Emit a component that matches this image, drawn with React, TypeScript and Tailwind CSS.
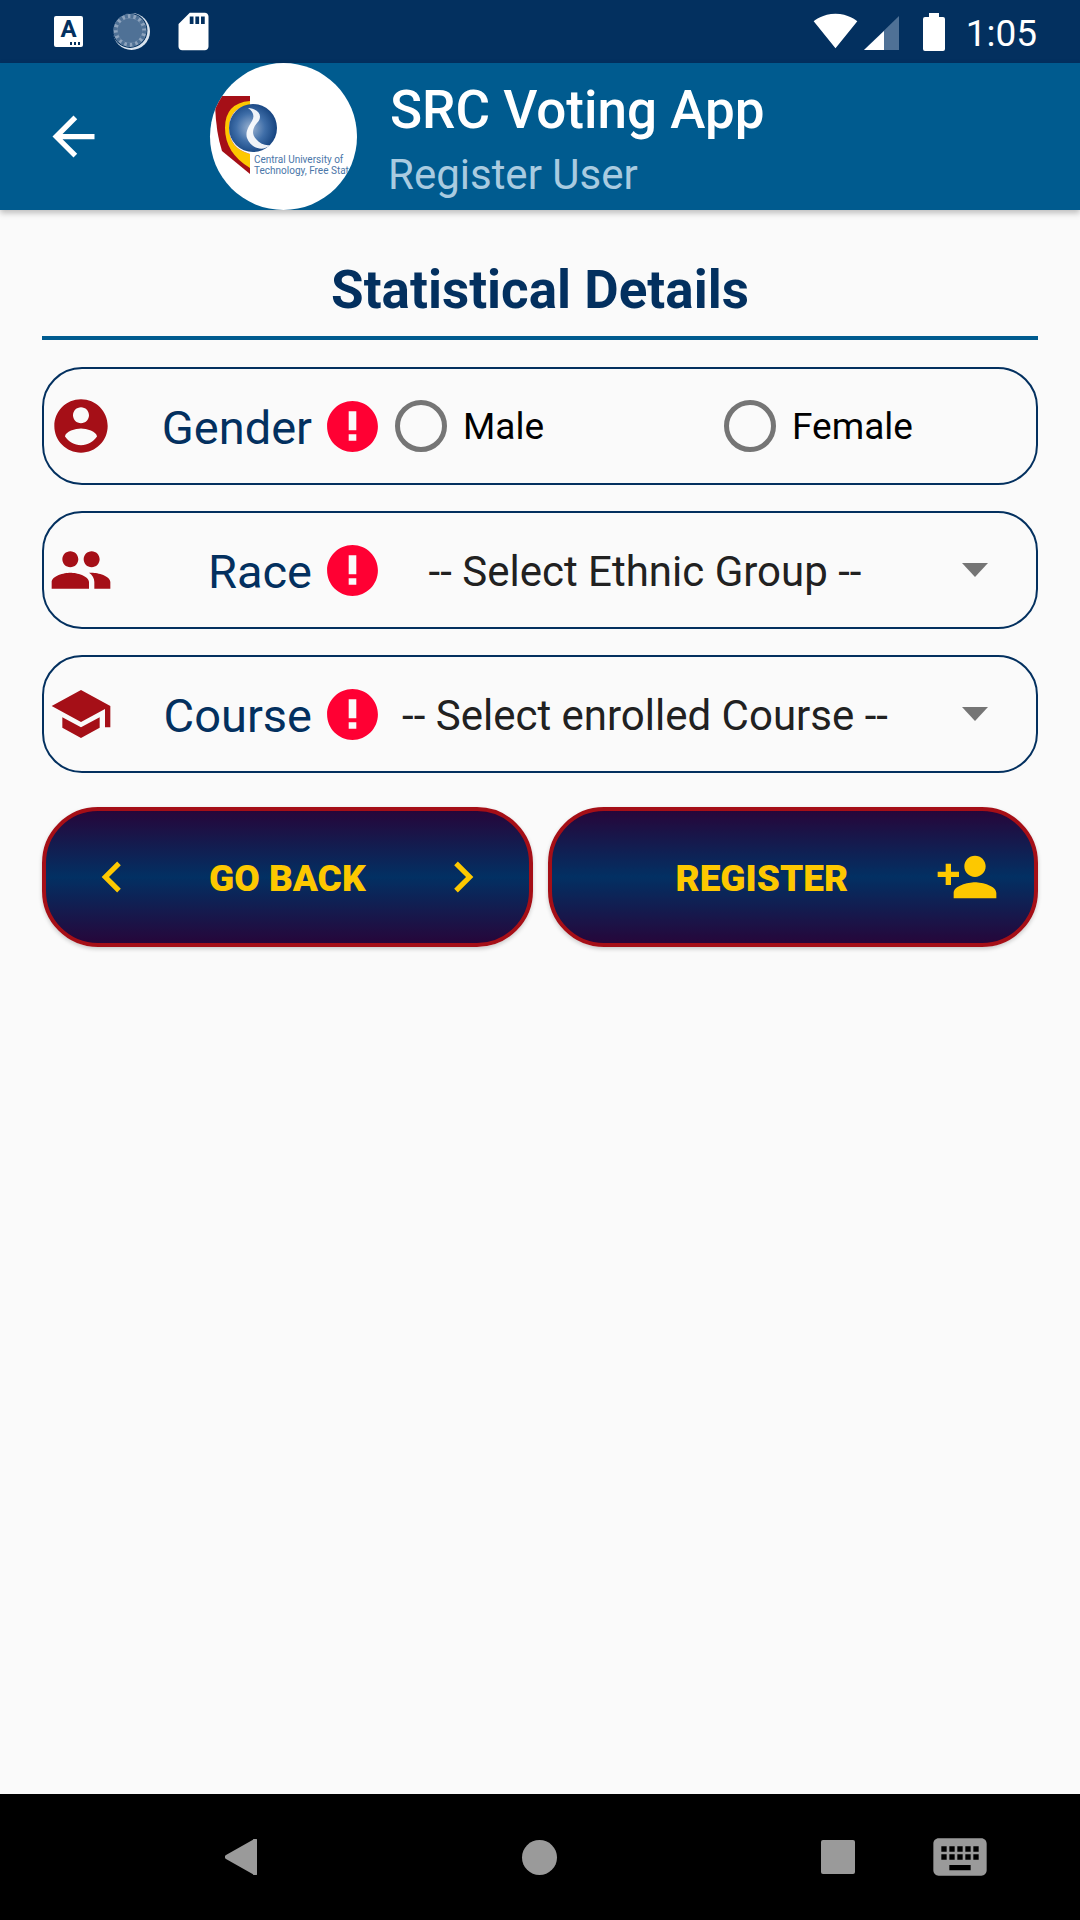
import type { ReactNode } from 'react';

const ICONS = {
  back: 'M20 11H7.83l5.59-5.59L12 4l-8 8 8 8 1.41-1.41L7.83 13H20v-2z',
  account: 'M12 2C6.48 2 2 6.48 2 12s4.48 10 10 10 10-4.48 10-10S17.52 2 12 2zm0 3c1.66 0 3 1.34 3 3s-1.34 3-3 3-3-1.34-3-3 1.34-3 3-3zm0 14.2c-2.5 0-4.71-1.28-6-3.22.03-1.99 4-3.08 6-3.08 1.99 0 5.97 1.09 6 3.08-1.29 1.94-3.5 3.22-6 3.22z',
  people: 'M16 11c1.66 0 2.99-1.34 2.99-3S17.66 5 16 5c-1.66 0-3 1.34-3 3s1.34 3 3 3zm-8 0c1.66 0 2.99-1.34 2.99-3S9.66 5 8 5C6.34 5 5 6.34 5 8s1.34 3 3 3zm0 2c-2.33 0-7 1.17-7 3.5V19h14v-2.5c0-2.33-4.67-3.5-7-3.5zm8 0c-.29 0-.62.02-.97.05 1.16.84 1.97 1.97 1.97 3.45V19h6v-2.5c0-2.33-4.67-3.5-7-3.5z',
  school: 'M5 13.18v4L12 21l7-3.82v-4L12 17l-7-3.82zM12 3L1 9l11 6 9-4.91V17h2V9L12 3z',
  left: 'M15.41 7.41L14 6l-6 6 6 6 1.41-1.41L10.83 12z',
  right: 'M10 6L8.59 7.41 13.17 12l-4.58 4.59L10 18l6-6z',
  personAdd: 'M15 12c2.21 0 4-1.79 4-4s-1.79-4-4-4-4 1.79-4 4 1.79 4 4 4zm-9-2V7H4v3H1v2h3v3h2v-3h3v-2H6zm9 4c-2.67 0-8 1.34-8 4v2h16v-2c0-2.66-5.33-4-8-4z',
  sd: 'M18 2h-8L4.02 8 4 20c0 1.1.9 2 2 2h12c1.1 0 2-.9 2-2V4c0-1.1-.9-2-2-2zm-6 6h-2V4h2v4zm3 0h-2V4h2v4zm3 0h-2V4h2v4z',
  keyboard: 'M20 5H4c-1.1 0-1.99.9-1.99 2L2 17c0 1.1.9 2 2 2h16c1.1 0 2-.9 2-2V7c0-1.1-.9-2-2-2zm-9 3h2v2h-2V8zm0 3h2v2h-2v-2zM8 8h2v2H8V8zm0 3h2v2H8v-2zm-1 2H5v-2h2v2zm0-3H5V8h2v2zm9 7H8v-2h8v2zm0-4h-2v-2h2v2zm0-3h-2V8h2v2zm3 3h-2v-2h2v2zm0-3h-2V8h2v2z',
};

function Icon({ d, className }: { d: string; className: string }) {
  return (
    <svg viewBox="0 0 24 24" fill="currentColor" className={`shrink-0 ${className}`}>
      <path d={d} />
    </svg>
  );
}

// the exclamation in the reference is heavier than the stock material one
function ErrorIcon() {
  return (
    <svg viewBox="0 0 24 24" fill="#ff0033" className="shrink-0 ml-[10px] w-[61px] h-[61px]">
      <path
        fillRule="evenodd"
        d="M12 2C6.48 2 2 6.48 2 12s4.48 10 10 10 10-4.48 10-10S17.52 2 12 2zM10.5 6h3v7.5h-3zM10.5 15h3v2.6h-3z"
      />
    </svg>
  );
}

function Logo() {
  return (
    <div className="w-[147px] h-[147px] rounded-full bg-white overflow-hidden shrink-0 z-10">
      <svg viewBox="0 0 147 147" className="w-full h-full">
        <defs>
          <radialGradient id="globe" cx="45%" cy="50%" r="55%">
            <stop offset="0%" stopColor="#9db4d2" />
            <stop offset="55%" stopColor="#3f6ea8" />
            <stop offset="100%" stopColor="#15437f" />
          </radialGradient>
        </defs>
        <path d="M9 33H40V111L12 88Q6 70 5 42Z" fill="#a50f17" />
        <path d="M40 38Q15 40 15 65Q15 90 40 105V91Q19 85 19 65Q19 45 40 42Z" fill="#fdc800" />
        <path d="M40 42Q19 45 19 65Q19 85 40 91Z" fill="#ffffff" />
        <circle cx="43" cy="65" r="24" fill="url(#globe)" />
        <path d="M38 45C50 46 53 54 47 60C43 65 41 70 46 76C50 81 56 83 60 82C52 90 40 84 37 75C35 69 39 63 42 58C45 53 43 48 38 45Z" fill="#ffffff" opacity="0.92" />
        <text x="44" y="100" fontSize="10" fill="#4a76a8" fontFamily="Roboto, sans-serif">Central University of</text>
        <text x="44" y="111" fontSize="10" fill="#4a76a8" fontFamily="Roboto, sans-serif">Technology, Free State</text>
      </svg>
    </div>
  );
}

function StatusBar() {
  return (
    <div className="h-[63px] bg-[#03305f] flex items-center text-white shrink-0">
      <div className="ml-[54px] w-[29px] h-[31px] rounded-[2px] bg-white relative flex justify-center">
        <span className="text-[#03305f] text-[24px] leading-[27px] font-bold">A</span>
        <span className="absolute right-[2px] bottom-[2px] w-[12px] h-[3px] bg-[radial-gradient(circle,#03305f_1.4px,transparent_1.5px)] bg-[length:4px_3px]" />
      </div>
      <svg viewBox="0 0 36 36" className="ml-[30px] w-[37px] h-[37px] shrink-0">
        <circle cx="18" cy="18" r="18" fill="#dbe4ee" />
        <circle cx="16.5" cy="17" r="17" fill="#03305f" />
        <circle cx="16.5" cy="17" r="16" fill="#8da3bd" />
        <circle cx="16.5" cy="17" r="12" fill="#4f7196" />
        <circle cx="16.5" cy="17" r="14" fill="none" stroke="#4f7196" strokeWidth="4" strokeDasharray="3 2.5" />
      </svg>
      <Icon d={ICONS.sd} className="ml-[21px] w-[45px] h-[45px]" />
      <svg viewBox="0 0 24 24" fill="currentColor" className="ml-auto mb-[3px] w-[45px] h-[45px] shrink-0">
        <path d="M12.01 21.49L23.64 7c-.45-.34-4.93-4-11.64-4C5.28 3 .81 6.66.36 7l11.63 14.49.01.01.01-.01z" />
      </svg>
      <svg viewBox="0 0 35 35" className="ml-[6px] w-[35px] h-[35px] shrink-0 mt-[2px]">
        <path d="M35 1V35H0Z" fill="#4f7196" />
        <path d="M20 16V35H0Z" fill="#ffffff" />
      </svg>
      <svg viewBox="0 0 22 38" fill="currentColor" className="ml-[24px] w-[22px] h-[38px] shrink-0">
        <path d="M6 0H16V4H20A2 2 0 0 1 22 6V36A2 2 0 0 1 20 38H2A2 2 0 0 1 0 36V6A2 2 0 0 1 2 4H6Z" />
      </svg>
      <span className="ml-[21px] mr-[43px] mt-[3px] text-[37px] leading-none">1:05</span>
    </div>
  );
}

function AppBar() {
  return (
    <div className="h-[147px] bg-[#005b8f] flex items-center shrink-0 relative shadow-[0_3px_6px_rgba(0,0,0,0.25)]">
      <Icon d={ICONS.back} className="ml-[42px] w-[63px] h-[63px] text-white" />
      <div className="ml-[105px]">
        <Logo />
      </div>
      <div className="ml-[31px] mt-[11px] flex flex-col">
        <span className="ml-[2px] text-white text-[53px] leading-[64px] font-medium">SRC Voting App</span>
        <span className="mt-[1px] text-[#a9cbe0] text-[42px] leading-[64px]">Register User</span>
      </div>
    </div>
  );
}

function Row({ icon, label, children }: { icon: string; label: string; children: ReactNode }) {
  return (
    <div className="h-[118px] rounded-[40px] border-2 border-[#03305f] flex items-center">
      <Icon d={icon} className="ml-[5px] w-[64px] h-[64px] text-[#a50f17]" />
      <span className="w-[199px] shrink-0 pt-[3px] text-right text-[47px] leading-none text-[#03305f]">{label}</span>
      <ErrorIcon />
      {children}
    </div>
  );
}

function Radio({ label }: { label: string }) {
  return (
    <div className="w-[329px] flex items-center">
      <span className="w-[52px] h-[52px] rounded-full border-[5px] border-[#757575] shrink-0" />
      <span className="ml-[16px] pt-[1px] text-[37px] leading-none text-black">{label}</span>
    </div>
  );
}

function SelectBox({ text }: { text: string }) {
  return (
    <div className="flex-1 flex items-center">
      <span className="w-[524px] pt-[3px] text-center text-[42px] leading-none text-[#212121]">{text}</span>
      <svg viewBox="0 0 26 14" className="ml-[55px] w-[26px] h-[14px] shrink-0" fill="#757575">
        <path d="M0 0H26L13 14Z" />
      </svg>
    </div>
  );
}

function ActionButton({ children }: { children: ReactNode }) {
  return (
    <div className="flex-1 h-[140px] rounded-[56px] border-4 border-[#a50f17] flex items-center bg-[linear-gradient(180deg,#26063a,#023063_50%,#26063a)] text-[#fdc800] shadow-[0_2px_4px_rgba(0,0,0,0.2)]">
      {children}
    </div>
  );
}

function NavBar() {
  return (
    <div className="h-[126px] bg-black flex items-center text-[#9a9a9a] shrink-0">
      <svg viewBox="0 0 32 36" fill="currentColor" className="ml-[225px] w-[32px] h-[36px] shrink-0">
        <path d="M28 0.8A2 2 0 0 1 32 2V34A2 2 0 0 1 28 35.2L1 20A2.4 2.4 0 0 1 1 16Z" />
      </svg>
      <div className="ml-[265px] w-[35px] h-[35px] rounded-full bg-[#9a9a9a] shrink-0" />
      <div className="ml-[264px] w-[34px] h-[34px] rounded-[2px] bg-[#9a9a9a] shrink-0" />
      <Icon d={ICONS.keyboard} className="ml-[73px] w-[64px] h-[64px]" />
    </div>
  );
}

export default function App() {
  return (
    <div className="w-[1080px] h-[1920px] flex flex-col bg-[#fafafa] font-[Roboto,sans-serif]">
      <StatusBar />
      <AppBar />
      <main className="flex-1 px-[42px]">
        <h1 className="pt-[52px] pb-[18px] text-center text-[53px] leading-[56px] font-bold text-[#03305f]">
          Statistical Details
        </h1>
        <div className="h-[4px] bg-[#005b8f]" />
        <div className="mt-[27px] flex flex-col gap-[26px]">
          <Row icon={ICONS.account} label="Gender">
            <div className="ml-[12px] flex">
              <Radio label="Male" />
              <Radio label="Female" />
            </div>
          </Row>
          <Row icon={ICONS.people} label="Race">
            <SelectBox text="-- Select Ethnic Group --" />
          </Row>
          <Row icon={ICONS.school} label="Course">
            <SelectBox text="-- Select enrolled Course --" />
          </Row>
        </div>
        <div className="mt-[34px] flex gap-[15px]">
          <ActionButton>
            <Icon d={ICONS.left} className="ml-[35px] w-[62px] h-[62px]" />
            <span className="flex-1 pt-[3px] text-center text-[37px] font-black">GO BACK</span>
            <Icon d={ICONS.right} className="mr-[35px] w-[62px] h-[62px]" />
          </ActionButton>
          <ActionButton>
            <span className="ml-[124px] pt-[3px] text-[37px] font-black">REGISTER</span>
            <Icon d={ICONS.personAdd} className="ml-auto mr-[35px] w-[64px] h-[64px]" />
          </ActionButton>
        </div>
      </main>
      <NavBar />
    </div>
  );
}
